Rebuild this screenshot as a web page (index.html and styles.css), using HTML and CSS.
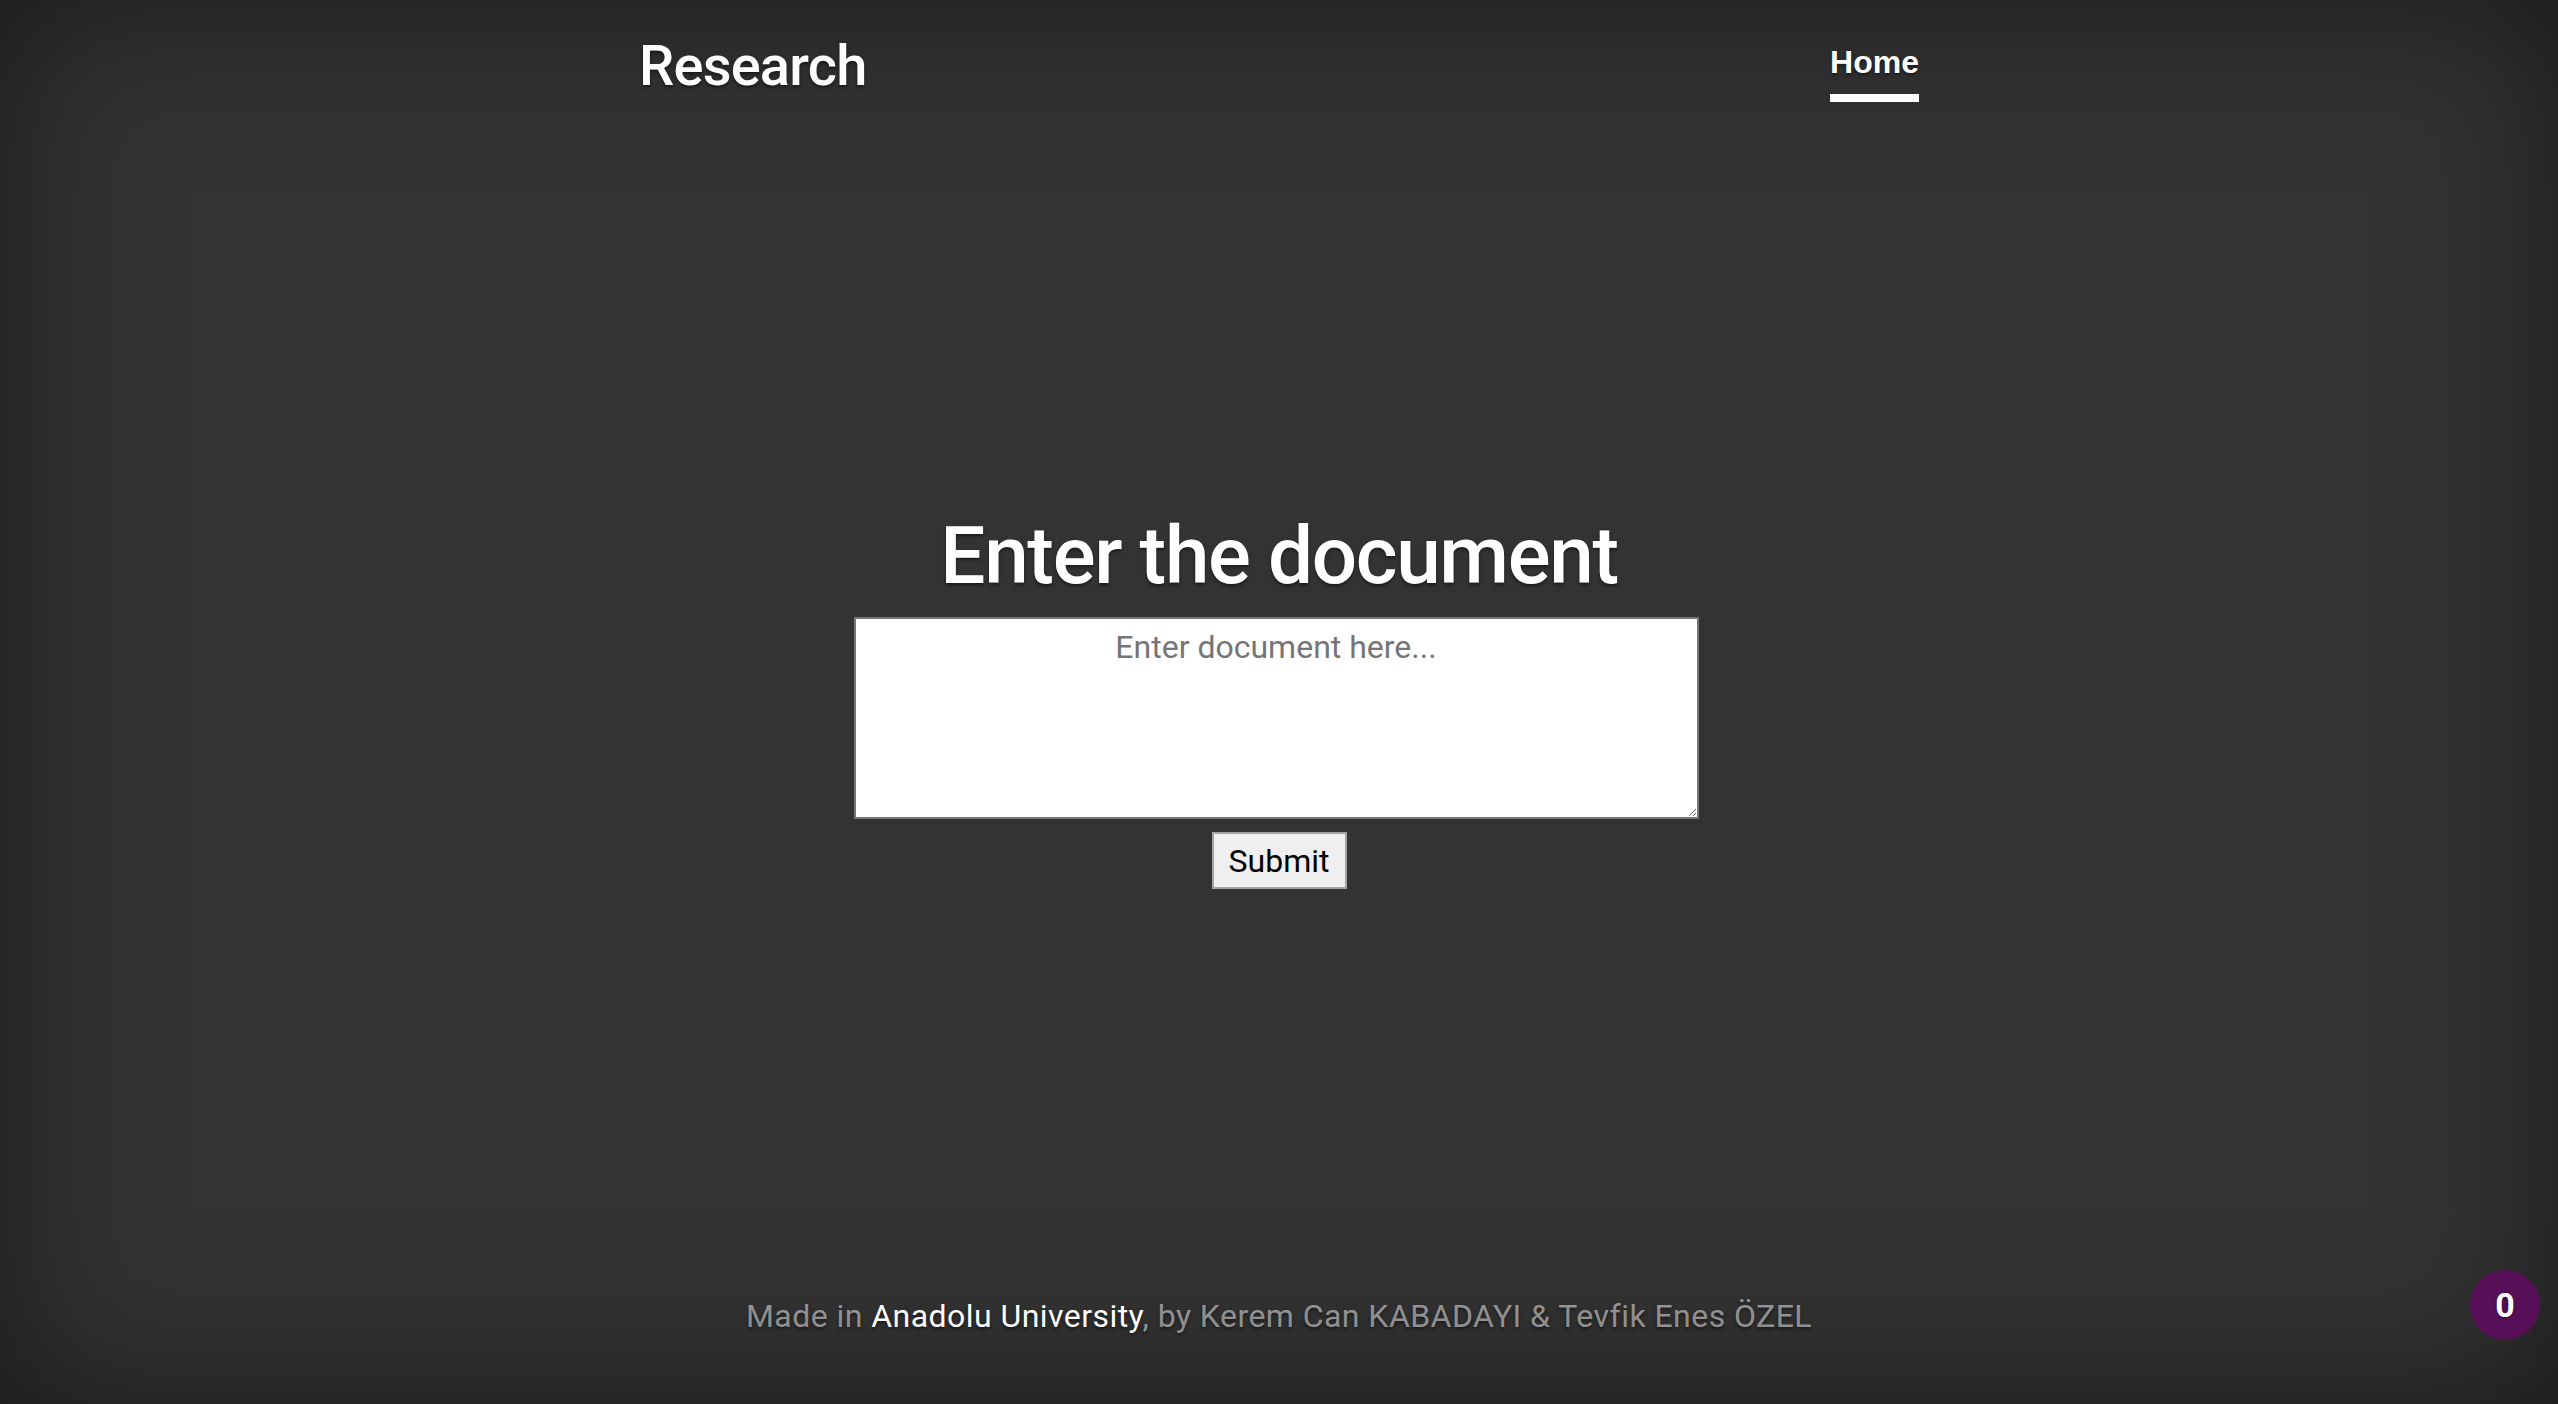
FILE: index.html
```html
<!DOCTYPE html>
<html lang="en">
<head>
<meta charset="utf-8">
<title>Research</title>
<link rel="stylesheet" href="styles.css">
</head>
<body>
<div class="cover-container">
  <header class="masthead">
    <h3 class="masthead-brand">Research</h3>
    <nav class="nav-masthead">
      <a class="nav-link active" href="#">Home</a>
    </nav>
  </header>
  <main class="cover">
    <h1 class="cover-heading">Enter the document</h1>
    <form class="doc-form">
      <textarea class="doc-input" placeholder="Enter document here..."></textarea>
      <button type="button" class="submit-btn">Submit</button>
    </form>
  </main>
  <footer class="mastfoot">
    <p>Made in <a href="#">Anadolu University</a>, by Kerem Can KABADAYI &amp; Tevfik Enes ÖZEL</p>
  </footer>
</div>
<div class="badge">0</div>
</body>
</html>
```
FILE: styles.css
```css
html, body {
  height: 100%;
  margin: 0;
  background-color: #333;
}
body {
  display: flex;
  color: #fff;
  font-family: Roboto, "Liberation Sans", sans-serif;
  font-size: 32px;
  line-height: 1.5;
  text-shadow: 0 1.6px 3.2px rgba(0,0,0,.5);
  box-shadow: inset 0 0 160px rgba(0,0,0,.5);
  box-sizing: border-box;
}
.cover-container {
  display: flex;
  flex-direction: column;
  width: 100%;
  max-width: 1344px;
  height: 100%;
  margin: 0 auto;
  padding: 30px 32px 32px;
  box-sizing: border-box;
}
.masthead {
  display: flex;
  justify-content: space-between;
  align-items: flex-start;
  margin-bottom: auto;
}
.masthead-brand {
  margin: 0;
  padding-top: 3px;
  font-size: 56px;
  font-weight: 500;
  line-height: 1.2;
  letter-spacing: -0.8px;
}
.nav-masthead {
  display: flex;
}
.nav-link {
  display: block;
  padding: 8px 0;
  font-family: "Liberation Sans", Arial, sans-serif;
  font-weight: 700;
  color: rgba(255,255,255,.5);
  text-decoration: none;
  border-bottom: 8px solid transparent;
}
.nav-link.active {
  color: #fff;
  border-bottom-color: #fff;
}
.cover {
  padding: 0 48px;
  text-align: center;
}
.cover-heading {
  margin: 0 0 13px;
  padding-top: 3px;
  font-size: 80px;
  font-weight: 500;
  line-height: 1.2;
  letter-spacing: -1.35px;
}
.doc-form {
  display: flex;
  flex-direction: column;
  align-items: center;
  gap: 13px;
}
.doc-input {
  width: 845px;
  height: 202px;
  box-sizing: border-box;
  border: 2px solid #767676;
  padding: 9px 4px 4px;
  margin: 0 6px 0 0;
  font-family: Roboto, "Liberation Sans", sans-serif;
  font-size: 32px;
  line-height: 1.2;
  text-align: center;
  background: #fff;
  color: #000;
}
.doc-input::placeholder {
  color: #757575;
}
.submit-btn {
  width: 135px;
  height: 57px;
  box-sizing: border-box;
  border: 2px solid #a5a5a5;
  background: #efefef;
  color: #000;
  font-family: Roboto, "Liberation Sans", sans-serif;
  font-size: 32px;
  padding: 0 12px;
  margin: 0;
}
.mastfoot {
  margin-top: auto;
  text-align: center;
  color: rgba(255,255,255,.5);
  letter-spacing: 0.45px;
}
.mastfoot p {
  margin: 0 0 32px;
}
.mastfoot a {
  color: #fff;
  text-decoration: none;
}
.badge {
  position: fixed;
  right: 18px;
  bottom: 64px;
  width: 70px;
  height: 70px;
  border-radius: 50%;
  background: #570f57;
  color: #fff;
  font-family: Roboto, "Liberation Sans", sans-serif;
  font-weight: 700;
  font-size: 34px;
  display: flex;
  align-items: center;
  justify-content: center;
  text-shadow: 0 1px 3px rgba(0,0,0,.5);
}
```
